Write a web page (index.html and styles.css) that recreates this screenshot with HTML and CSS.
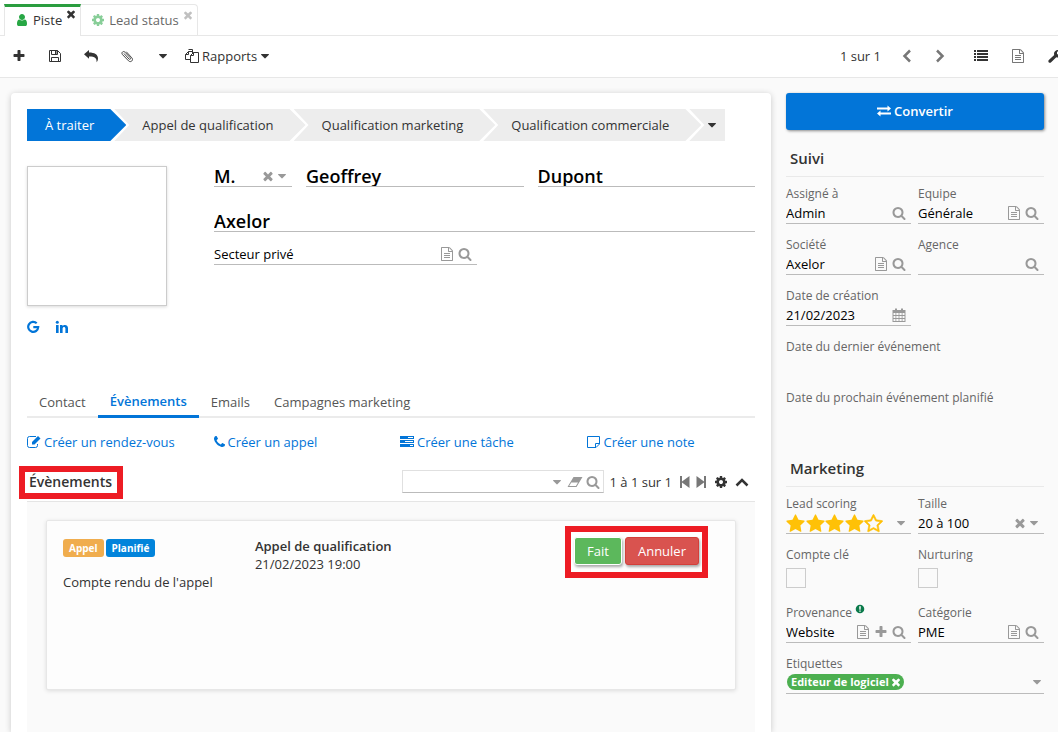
FILE: index.html
```html
<!DOCTYPE html>
<html lang="fr">
<head>
<meta charset="utf-8">
<title>Piste</title>
<link rel="stylesheet" href="styles.css">
</head>
<body>
<svg class="sprite" aria-hidden="true">
  <symbol id="plus" viewBox="0 0 1792 1792"><path d="M1600 736v192q0 40-28 68t-68 28h-416v416q0 40-28 68t-68 28h-192q-40 0-68-28t-28-68v-416h-416q-40 0-68-28t-28-68v-192q0-40 28-68t68-28h416v-416q0-40 28-68t68-28h192q40 0 68 28t28 68v416h416q40 0 68 28t28 68z"/></symbol>
  <symbol id="search" viewBox="0 0 1792 1792"><path d="M1216 832q0-185-131.500-316.500t-316.500-131.500-316.500 131.500-131.500 316.500 131.500 316.500 316.500 131.500 316.500-131.500 131.500-316.500zm512 832q0 52-38 90t-90 38q-54 0-90-38l-343-342q-179 124-399 124-143 0-273.500-55.500t-225-150-150-225-55.500-273.500 55.500-273.500 150-225 225-150 273.500-55.500 273.500 55.500 225 150 150 225 55.500 273.500q0 220-124 399l343 343q37 37 37 90z"/></symbol>
  <symbol id="caret" viewBox="0 0 1792 1792"><path d="M1408 704q0 26-19 45l-448 448q-19 19-45 19t-45-19l-448-448q-19-19-19-45t19-45 45-19h896q26 0 45 19t19 45z"/></symbol>
  <symbol id="close" viewBox="0 0 1792 1792"><path d="M1490 1322q0 40-28 68l-136 136q-28 28-68 28t-68-28l-294-294-294 294q-28 28-68 28t-68-28l-136-136q-28-28-28-68t28-68l294-294-294-294q-28-28-28-68t28-68l136-136q28-28 68-28t68 28l294 294 294-294q28-28 68-28t68 28l136 136q28 28 28 68t-28 68l-294 294 294 294q28 28 28 68z"/></symbol>
  <symbol id="star" viewBox="32 0 1728 1728"><path d="M1728 647q0 22-26 48l-363 354 86 500q1 7 1 20 0 21-10.500 35.500t-30.500 14.500q-19 0-40-12l-449-236-449 236q-22 12-40 12-21 0-31.500-14.500t-10.500-35.500q0-6 2-20l86-500-364-354q-25-27-25-48 0-37 56-46l502-73 225-455q19-41 49-41t49 41l225 455 502 73q56 9 56 46z"/></symbol>
  <symbol id="star-o" viewBox="32 0 1728 1728"><path d="M1201 1004l306-297-422-62-189-382-189 382-422 62 306 297-73 421 378-199 377 199zm527-357q0 22-26 48l-363 354 86 500q1 7 1 20 0 50-41 50-19 0-40-12l-449-236-449 236q-22 12-40 12-21 0-31.500-14.500t-10.500-35.500q0-6 2-20l86-500-364-354q-25-27-25-48 0-37 56-46l502-73 225-455q19-41 49-41t49 41l225 455 502 73q56 9 56 46z" stroke="currentColor" stroke-width="50"/></symbol>
  <symbol id="cog" viewBox="0 0 1792 1792"><path d="M1152 896q0-106-75-181t-181-75-181 75-75 181 75 181 181 75 181-75 75-181zm512-109v222q0 12-8 23t-20 13l-185 28q-19 54-39 91 35 50 107 138 10 12 10 25t-9 23q-27 37-99 108t-94 71q-12 0-26-9l-138-108q-44 23-91 38-16 136-29 186-7 28-36 28h-222q-14 0-24.500-8.500t-11.500-21.500l-28-184q-49-16-90-37l-141 107q-10 9-25 9-14 0-25-11-126-114-165-168-7-10-7-23 0-12 8-23 15-21 51-66.500t54-70.500q-27-50-41-99l-183-27q-13-2-21-12.500t-8-23.500v-222q0-12 8-23t19-13l186-28q14-46 39-92-40-57-107-138-10-12-10-24 0-10 9-23 26-36 98.500-107.500t94.500-71.500q13 0 26 10l138 107q44-23 91-38 16-136 29-186 7-28 36-28h222q14 0 24.500 8.500t11.500 21.500l28 184q49 16 90 37l142-107q9-9 24-9 13 0 25 10 129 119 165 170 7 8 7 22 0 12-8 23-15 21-51 66.500t-54 70.500q26 50 41 98l183 28q13 2 21 12.500t8 23.500z"/></symbol>
  <symbol id="user" viewBox="0 0 1792 1792"><path d="M1536 1399q0 109-62.500 187t-150.500 78h-854q-88 0-150.500-78t-62.500-187q0-85 8.500-160.500t31.500-152 58.500-131 94-89 134.500-34.500q131 128 313 128t313-128q76 0 134.500 34.500t94 89 58.500 131 31.500 152 8.500 160.500zm-256-887q0 159-112.500 271.500t-271.500 112.500-271.500-112.500-112.500-271.500 112.500-271.500 271.500-112.500 271.500 112.500 112.500 271.500z"/></symbol>
  <symbol id="file" viewBox="0 0 1792 1792"><path d="M1596 380q28 28 48 76t20 88v1152q0 40-28 68t-68 28h-1344q-40 0-68-28t-28-68v-1600q0-40 28-68t68-28h896q40 0 88 20t76 48zm-444-244v376h376q-10-29-22-41l-313-313q-12-12-41-22zm384 1528v-1024h-416q-40 0-68-28t-28-68v-416h-768v1536h1280zM512 768h768v128h-768zM512 1024h768v128h-768zM512 1280h768v128h-768z"/></symbol>
  <symbol id="phone" viewBox="192 0 1408 1792"><path d="M1600 1240q0 27-10 70.500t-21 68.500q-21 50-122 106-94 51-186 51-27 0-53-3.500t-57.500-12.500-47-14.500-55.500-20.500-49-18q-98-35-175-83-127-79-264-216t-216-264q-48-77-83-175-3-9-18-49t-20.500-55.500-14.500-47-12.500-57.500-3.500-53q0-92 51-186 56-101 106-122 25-11 68.500-21t70.500-10q14 0 21 3 18 6 53 76 11 19 30 54t35 63.500 31 53.500q3 4 17.500 25t21.500 35.500 7 28.500q0 20-28.500 50t-62 55-62 53-28.500 46q0 9 5 22.500t8.500 20.500 14 24 11.500 19q76 137 174 235t235 174q2 1 19 11.500t24 14 20.500 8.500 22.500 5q18 0 46-28.500t53-62 55-62 50-28.500q14 0 28.500 7t35.500 21.500 25 17.500q25 15 53.500 31t63.500 35 54 30q70 35 76 53 3 7 3 21z"/></symbol>
  <symbol id="save" viewBox="0 0 14 14"><path fill="none" stroke="currentColor" d="M1.500 1.500H9.500L12.500 4.500V12.500H1.500ZM3.500 12.500V8.500H10.500V12.500M3.500 1.500V5.500H9.500V1.500"/><path d="M7 2h1.500v3H7z"/></symbol>
  <symbol id="reply" viewBox="0 0 14 14"><path d="M0 5.200 5 1V3.500C10.500 3.500 14 5.500 14 9.500 14 11 13.300 12.500 12.600 13.300 12.900 9.500 11.300 7.500 5 7.500V9.800Z"/></symbol>
  <symbol id="clip" viewBox="0 0 14 14"><path fill="none" stroke="currentColor" stroke-width=".9" stroke-linecap="round" d="M4.200 4.800 9 10C10 11 11.200 9.800 10.300 8.900L5 3.200C3.300 1.400.8 3.700 2.500 5.600L8.600 11.900C10.800 14 13.900 11 11.800 8.800L6.500 3"/></symbol>
  <symbol id="copy" viewBox="0 0 14 14"><path fill="none" stroke="currentColor" d="M5.500 10.500H.5V5.500L3.500 2.500H7.500V4M3.500 2.500V5.500H.5M5.500 13.500V6.500L8.500 3.500H13.500V13.500ZM8.500 3.500V6.500H5.500M7.500 3V.5H3.500"/></symbol>
  <symbol id="list" viewBox="0 0 14 14"><path d="M0 1h2v2H0zM3 1h11v2H3zM0 4h2v2H0zM3 4h11v2H3zM0 7h2v2H0zM3 7h11v2H3zM0 10h2v2H0zM3 10h11v2H3z"/></symbol>
  <symbol id="wrench" viewBox="0 0 14 14"><path d="M.6 11.300 6.200 6C5.300 3 7.600.5 11.300 1L9 3.100V5.100L11 6 13.500 4.300C13.700 7.500 11 9.200 8.300 8.200L2.900 13.600C1.500 14.300-.3 12.800.6 11.300Z"/></symbol>
  <symbol id="left" viewBox="0 0 14 14"><path fill="none" stroke="currentColor" stroke-width="2.500" d="M10 1.500 4.500 7 10 12.500"/></symbol>
  <symbol id="right" viewBox="0 0 14 14"><path fill="none" stroke="currentColor" stroke-width="2.500" d="M4 1.500 9.500 7 4 12.500"/></symbol>
  <symbol id="up" viewBox="0 0 14 14"><path fill="none" stroke="currentColor" stroke-width="2.500" d="M1.500 10.500 7 5 12.500 10.500"/></symbol>
  <symbol id="exchange" viewBox="0 0 14 14"><path d="M0 3.500H10.500V1.500L14 4.500 10.500 7.500V5.500H0ZM14 8.500H3.500V6.500L0 9.500 3.500 12.500V10.500H14Z"/></symbol>
  <symbol id="google" viewBox="0 0 14 14"><path fill="none" stroke="currentColor" stroke-width="2.200" d="M9.700 3.300A5 5 0 1 0 11.200 7.200H6.300"/></symbol>
  <symbol id="linkedin" viewBox="0 0 14 14"><path d="M1 5h2.600v8H1zM5 5h2.500v1.100C8.600 4.300 13 4.200 13 8v5h-2.600V8.600C10.400 6.300 7.600 6.500 7.600 8.600V13H5z"/><circle cx="2.300" cy="2.300" r="1.500"/></symbol>
  <symbol id="edit" viewBox="0 0 14 14"><path fill="none" stroke="currentColor" d="M9 1.500H2.500Q.5 1.500.5 3.500V10.500Q.5 12.500 2.500 12.500H8.500Q10.500 12.500 10.500 10.500V9"/><path d="M5 7 11 1 13.500 3.500 7.500 9.500H5Z"/></symbol>
  <symbol id="tasks" viewBox="0 0 14 14"><path fill-rule="evenodd" d="M0 1h14v3H0zM8 2v1h5V2zM0 5h14v3H0zM5 6v1h8V6zM0 9h14v3H0zM10 10v1h3v-1z"/></symbol>
  <symbol id="note" viewBox="0 0 14 14"><path fill="none" stroke="currentColor" d="M.5 1.500H12.500V9L9 12.500H.5ZM12.500 8.500H8.500V12.500"/></symbol>
  <symbol id="eraser" viewBox="0 0 16 14"><path fill-rule="evenodd" d="M6.500 2H15.500L9.500 12H.5ZM4.300 7.500 2.200 11H8.900L11 7.500Z"/></symbol>
  <symbol id="first" viewBox="0 0 10 14"><path d="M0 1h2v5.500L9.500 1V13L2 7.500V13H0z"/></symbol>
  <symbol id="last" viewBox="0 0 10 14"><path d="M10 1H8v5.500L.5 1V13L8 7.500V13h2z"/></symbol>
  <symbol id="calendar" viewBox="0 0 14 14"><path fill-rule="evenodd" d="M.5 2H3V.5H5V2H9V.5H11V2H13.500V14H.5ZM1.500 5V7H3.500V5ZM4.300 5V7H6.600V5ZM7.400 5V7H9.700V5ZM10.500 5V7H12.500V5ZM1.500 8V10H3.500V8ZM4.300 8V10H6.600V8ZM7.400 8V10H9.700V8ZM10.500 8V10H12.500V8ZM1.500 11V13H3.500V11ZM4.300 11V13H6.600V11ZM7.400 11V13H9.700V11ZM10.500 11V13H12.500V11Z"/></symbol>
  <symbol id="alert" viewBox="0 0 14 14"><path fill-rule="evenodd" d="M7 1a6 6 0 1 0 0 12A6 6 0 1 0 7 1ZM5.800 3H8.200L7.900 8H6.100ZM6 9H8V11H6Z"/></symbol>
</svg>

<nav class="app-tabs">
  <div class="app-tab active">
    <svg class="icon"><use href="#user"/></svg><a href="#">Piste</a>
    <button class="tab-close" aria-label="Fermer Piste"><svg class="icon small"><use href="#close"/></svg></button>
  </div>
  <div class="app-tab">
    <svg class="icon"><use href="#cog"/></svg><a href="#">Lead status</a>
    <button class="tab-close" aria-label="Fermer Lead status"><svg class="icon small"><use href="#close"/></svg></button>
  </div>
</nav>

<header class="toolbar">
  <div class="tools">
    <button aria-label="Nouveau"><svg class="icon"><use href="#plus"/></svg></button>
    <button aria-label="Enregistrer"><svg class="icon"><use href="#save"/></svg></button>
    <button aria-label="Retour"><svg class="icon"><use href="#reply"/></svg></button>
    <button aria-label="Pièces jointes"><svg class="icon"><use href="#clip"/></svg></button>
    <button aria-label="Plus"><svg class="icon"><use href="#caret"/></svg></button>
  </div>
  <button class="reports"><svg class="icon"><use href="#copy"/></svg><span>Rapports</span><svg class="icon"><use href="#caret"/></svg></button>
  <div class="pager">
    <span>1 sur 1</span>
    <button class="muted" aria-label="Précédent"><svg class="icon"><use href="#left"/></svg></button>
    <button class="muted" aria-label="Suivant"><svg class="icon"><use href="#right"/></svg></button>
  </div>
  <div class="views">
    <button aria-label="Liste"><svg class="icon"><use href="#list"/></svg></button>
    <button class="muted" aria-label="Formulaire"><svg class="icon"><use href="#file"/></svg></button>
    <button aria-label="Outils"><svg class="icon"><use href="#wrench"/></svg></button>
  </div>
</header>

<div class="layout">
  <main class="sheet">
    <div class="steps">
      <button class="step current">À traiter</button>
      <button class="step">Appel de qualification</button>
      <button class="step">Qualification marketing</button>
      <button class="step">Qualification commerciale</button>
      <button class="step more" aria-label="Autres statuts"><svg class="icon"><use href="#caret"/></svg></button>
    </div>

    <section class="identity">
      <div>
        <div class="photo"></div>
        <div class="social">
          <a href="#" aria-label="Google"><svg class="icon"><use href="#google"/></svg></a>
          <a href="#" aria-label="LinkedIn"><svg class="icon"><use href="#linkedin"/></svg></a>
        </div>
      </div>
      <div class="names">
        <div class="name-row">
          <div class="control big tight"><input aria-label="Civilité" value="M."><button aria-label="Effacer"><svg class="icon"><use href="#close"/></svg></button><button aria-label="Choisir"><svg class="icon"><use href="#caret"/></svg></button></div>
          <div class="control big"><input aria-label="Prénom" value="Geoffrey"></div>
          <div class="control big"><input aria-label="Nom" value="Dupont"></div>
        </div>
        <div class="control big"><input aria-label="Entreprise" value="Axelor"></div>
        <div class="control sector"><input aria-label="Secteur" value="Secteur privé"><button aria-label="Ouvrir"><svg class="icon"><use href="#file"/></svg></button><button aria-label="Rechercher"><svg class="icon"><use href="#search"/></svg></button></div>
      </div>
    </section>

    <nav class="form-tabs">
      <a href="#">Contact</a>
      <a href="#" class="active">Évènements</a>
      <a href="#">Emails</a>
      <a href="#">Campagnes marketing</a>
    </nav>

    <div class="actions">
      <a href="#"><svg class="icon"><use href="#edit"/></svg>Créer un rendez-vous</a>
      <a href="#"><svg class="icon phone"><use href="#phone"/></svg>Créer un appel</a>
      <a href="#"><svg class="icon"><use href="#tasks"/></svg>Créer une tâche</a>
      <a href="#"><svg class="icon"><use href="#note"/></svg>Créer une note</a>
    </div>

    <section class="events">
      <div class="events-head">
        <h2 class="marked">Évènements</h2>
        <div class="search-box"><input aria-label="Filtrer"><button aria-label="Filtres"><svg class="icon"><use href="#caret"/></svg></button><button aria-label="Vider"><svg class="icon wide"><use href="#eraser"/></svg></button><button aria-label="Rechercher"><svg class="icon"><use href="#search"/></svg></button></div>
        <span class="count">1 à 1 sur 1</span>
        <div class="page-nav">
          <button aria-label="Première page"><svg class="icon narrow"><use href="#first"/></svg></button>
          <button aria-label="Dernière page"><svg class="icon narrow"><use href="#last"/></svg></button>
        </div>
        <div class="head-tools">
          <button aria-label="Options"><svg class="icon"><use href="#cog"/></svg></button>
          <button aria-label="Réduire"><svg class="icon"><use href="#up"/></svg></button>
        </div>
      </div>
      <div class="events-body">
        <article class="event">
          <div>
            <div class="badges"><span class="badge orange">Appel</span><span class="badge blue">Planifié</span></div>
            <p class="report">Compte rendu de l'appel</p>
          </div>
          <div class="event-info">
            <strong>Appel de qualification</strong>
            <time datetime="2023-02-21T19:00">21/02/2023 19:00</time>
          </div>
          <div class="event-actions marked">
            <button class="btn done">Fait</button>
            <button class="btn cancel">Annuler</button>
          </div>
        </article>
      </div>
    </section>
  </main>

  <aside class="side">
    <button class="convert"><svg class="icon"><use href="#exchange"/></svg>Convertir</button>

    <h2>Suivi</h2>
    <div class="fields">
      <div class="field"><label for="assignee">Assigné à</label><div class="control"><input id="assignee" value="Admin"><button aria-label="Rechercher"><svg class="icon"><use href="#search"/></svg></button></div></div>
      <div class="field"><label for="team">Equipe</label><div class="control"><input id="team" value="Générale"><button aria-label="Ouvrir"><svg class="icon"><use href="#file"/></svg></button><button aria-label="Rechercher"><svg class="icon"><use href="#search"/></svg></button></div></div>
      <div class="field"><label for="company">Société</label><div class="control"><input id="company" value="Axelor"><button aria-label="Ouvrir"><svg class="icon"><use href="#file"/></svg></button><button aria-label="Rechercher"><svg class="icon"><use href="#search"/></svg></button></div></div>
      <div class="field"><label for="agency">Agence</label><div class="control"><input id="agency"><button aria-label="Rechercher"><svg class="icon"><use href="#search"/></svg></button></div></div>
      <div class="field"><label for="created">Date de création</label><div class="control"><input id="created" value="21/02/2023"><button aria-label="Calendrier"><svg class="icon"><use href="#calendar"/></svg></button></div></div>
      <div class="field full"><label for="last-event">Date du dernier événement</label><div class="control plain"><input id="last-event" readonly></div></div>
      <div class="field full"><label for="next-event">Date du prochain événement planifié</label><div class="control plain"><input id="next-event" readonly></div></div>
    </div>

    <h2>Marketing</h2>
    <div class="fields">
      <div class="field"><span class="label" id="scoring">Lead scoring</span><div class="control tight"><div class="stars" role="img" aria-labelledby="scoring"><svg><use href="#star"/></svg><svg><use href="#star"/></svg><svg><use href="#star"/></svg><svg><use href="#star"/></svg><svg><use href="#star-o"/></svg></div><button aria-label="Choisir"><svg class="icon"><use href="#caret"/></svg></button></div></div>
      <div class="field"><label for="size">Taille</label><div class="control tight"><input id="size" value="20 à 100"><button aria-label="Effacer"><svg class="icon"><use href="#close"/></svg></button><button aria-label="Choisir"><svg class="icon"><use href="#caret"/></svg></button></div></div>
      <div class="field"><label for="key">Compte clé</label><input type="checkbox" id="key"></div>
      <div class="field"><label for="nurturing">Nurturing</label><input type="checkbox" id="nurturing"></div>
      <div class="field"><label for="source">Provenance <svg class="icon alert"><use href="#alert"/></svg></label><div class="control"><input id="source" value="Website"><button aria-label="Ouvrir"><svg class="icon"><use href="#file"/></svg></button><button aria-label="Ajouter"><svg class="icon"><use href="#plus"/></svg></button><button aria-label="Rechercher"><svg class="icon"><use href="#search"/></svg></button></div></div>
      <div class="field"><label for="category">Catégorie</label><div class="control"><input id="category" value="PME"><button aria-label="Ouvrir"><svg class="icon"><use href="#file"/></svg></button><button aria-label="Rechercher"><svg class="icon"><use href="#search"/></svg></button></div></div>
      <div class="field full"><label for="tags">Etiquettes</label><div class="control tags"><span class="tag">Editeur de logiciel<button aria-label="Retirer"><svg class="icon small"><use href="#close"/></svg></button></span><input id="tags"><button aria-label="Choisir"><svg class="icon"><use href="#caret"/></svg></button></div></div>
    </div>
  </aside>
</div>
</body>
</html>
```
FILE: styles.css
```css
* { box-sizing: border-box; }

html, body { height: 100%; }

body {
  margin: 0;
  display: flex;
  flex-direction: column;
  overflow: hidden;
  background: #fafafa;
  color: #333;
  font: 13px/20px "Open Sans", "Noto Sans", sans-serif;
}

h2, p { margin: 0; }

a { color: #0275d8; text-decoration: none; }

button, input {
  margin: 0;
  padding: 0;
  border: 0;
  background: none;
  color: inherit;
  font: inherit;
}

button { display: inline-flex; align-items: center; justify-content: center; }

.sprite { display: none; }

.icon { flex: none; display: block; width: 14px; height: 14px; fill: currentColor; }
.icon.small { width: 12px; height: 12px; }
.icon.wide { width: 16px; }
.icon.narrow { width: 10px; }
.icon.phone { width: 11px; }

/* Application tabs */
.app-tabs {
  flex: none;
  display: flex;
  height: 36px;
  padding: 4px 4px 0;
  background: #fff;
  border-bottom: 1px solid #e7e7e7;
}

.app-tab {
  display: flex;
  align-items: center;
  gap: 4px;
  height: 31px;
  padding: 0 3px 0 10px;
  border: 1px solid #e7e7e7;
  border-left: 0;
  border-bottom: 0;
  border-radius: 0 4px 0 0;
  color: #28a745;
}

.app-tab a { color: #333; }
.app-tab:not(.active) > .icon { opacity: .55; }
.app-tab:not(.active) a { opacity: .75; }
.app-tab:not(.active) .tab-close { opacity: .3; }

.app-tab.active {
  height: 32px;
  padding: 0 3px 3px 10px;
  border-left: 1px solid #e7e7e7;
  border-top: 3px solid #2a9d3f;
  border-radius: 0;
  background: #fff;
}

.tab-close { align-self: flex-start; margin-left: -1px; padding-top: 4px; color: #333; }
.active .tab-close { padding-top: 1px; }

/* Toolbar */
.toolbar {
  flex: none;
  display: flex;
  align-items: center;
  height: 42px;
  padding: 0 0 2px 12px;
  overflow: hidden;
  background: #fff;
  border-bottom: 1px solid #e7e7e7;
}

.tools { display: flex; gap: 22px; }
.reports { margin-left: 15px; gap: 3px; }
.reports .icon:last-child { margin-left: -2px; }
.pager { display: flex; align-items: center; gap: 19px; margin-left: auto; }
.views { display: flex; gap: 23px; margin: 0 -4px 0 27px; }
.muted { color: #777; }

/* Page */
.layout {
  flex: 1;
  display: flex;
  gap: 15px;
  min-height: 0;
  padding: 15px 14px 0 11px;
}

.sheet {
  flex: 1;
  display: flex;
  flex-direction: column;
  min-width: 0;
  padding: 16px 16px 0;
  border-radius: 4px 4px 0 0;
  background: #fff;
  box-shadow: 0 1px 6px rgba(0, 0, 0, .2);
}

/* Status steps */
.steps { display: flex; height: 32px; }

.step {
  height: 32px;
  margin-left: -12px;
  padding: 0 32px 0 28px;
  background: #ededed;
  white-space: nowrap;
  clip-path: polygon(0 0, calc(100% - 16px) 0, 100% 50%, calc(100% - 16px) 100%, 0 100%, 15px 50%);
}

.step.current {
  margin-left: 0;
  padding-left: 18px;
  background: #0275d8;
  color: #fff;
  clip-path: polygon(0 0, calc(100% - 16px) 0, 100% 50%, calc(100% - 16px) 100%, 0 100%);
}

.step.more {
  padding: 0 6px 0 16px;
  clip-path: polygon(0 0, 100% 0, 100% 100%, 0 100%, 15px 50%);
}

/* Identity */
.identity {
  display: grid;
  grid-template-columns: 169px 1fr;
  gap: 18px;
  height: 221px;
  margin-top: 25px;
}

.photo {
  width: 140px;
  height: 140px;
  border: 1px solid #ccc;
  box-shadow: 0 1px 3px rgba(0, 0, 0, .15);
}

.social { display: flex; gap: 14px; margin-top: 14px; }

.names { display: flex; flex-direction: column; gap: 12px; }
.name-row { display: grid; grid-template-columns: 78px 1fr 1fr; gap: 14px; margin-bottom: 12px; }

.control {
  display: flex;
  align-items: center;
  gap: 4px;
  height: 21px;
  padding-right: 5px;
  border-bottom: 1px solid #bbb;
  color: #999;
}

.control input { flex: 1; min-width: 0; width: 0; height: 20px; color: #000; outline: 0; }
.control.tight { gap: 0; padding-right: 3px; }
.control.plain { border-color: transparent; }
.control.big { font-size: 18px; font-weight: 600; }
.sector { width: 263px; }

/* Form tabs */
.form-tabs { display: flex; height: 31px; border-bottom: 2px solid #ebebeb; }
.form-tabs a { height: 31px; padding: 5px 12px 0; color: #555; }
.form-tabs .active { padding-top: 4px; border-bottom: 3px solid #0275d8; color: #0275d8; font-weight: 600; }

.actions { display: grid; grid-template-columns: repeat(4, 1fr); gap: 18px; padding: 14px 0 10px; }
.actions a { display: flex; align-items: center; gap: 3px; white-space: nowrap; }

/* Events */
.events { flex: 1; display: flex; flex-direction: column; }

.events-head {
  display: flex;
  align-items: center;
  height: 40px;
  padding: 0 6px 0 2px;
  border-bottom: 1px solid #e5e5e5;
}

.events-head h2 { margin: 2px auto 0 -4px; padding: 0 5px 1px 4px; font-size: 14px; font-weight: 600; line-height: 20px; }

.marked { outline: 6px solid #ed1c24; background: #fff; }

.search-box {
  display: flex;
  align-items: center;
  gap: 3px;
  width: 202px;
  height: 23px;
  padding-right: 3px;
  border: 1px solid #e0e0e0;
  border-bottom-color: #bbb;
  color: #999;
}

.search-box input { flex: 1; min-width: 0; outline: 0; }
.count { margin-left: 5px; }
.page-nav { display: flex; gap: 6px; margin-left: 8px; color: #777; }
.head-tools { display: flex; gap: 7px; margin-left: 8px; }

.events-body { flex: 1; padding: 18px 19px; background: #fafafa; }

.event {
  display: grid;
  grid-template-columns: 7fr 12fr auto;
  gap: 18px;
  align-items: start;
  height: 170px;
  padding: 11px 33px 16px 16px;
  border: 1px solid #e7e7e7;
  border-radius: 2px;
  background: #fdfdfd;
  box-shadow: 0 1px 4px rgba(0, 0, 0, .12);
}

.badges { display: flex; gap: 2px; padding-top: 7px; }
.badge { padding: 0 6px; border-radius: 3px; color: #fff; font-size: 10px; font-weight: 700; line-height: 18px; }
.orange { background: #f0ad4e; }
.blue { background: #0284db; }
.report { margin-top: 15px; white-space: nowrap; }

.event-info { display: flex; flex-direction: column; padding-top: 5px; line-height: 18px; white-space: nowrap; }
.event-info strong { font-weight: 600; }

.event-actions { display: flex; gap: 3px; height: 40px; padding: 5px 3px 7px; }

.btn {
  height: 28px;
  padding: 0 12px;
  border: 1px solid #fff;
  border-radius: 3px;
  color: #fff;
  box-shadow: 1px 2px 3px rgba(0, 0, 0, .35);
}

.done { background: #5cb85c; }
.cancel { background: #d9534f; border-color: #d43f3a; }

/* Side panel */
.side { flex: none; width: 258px; }

.convert {
  width: 100%;
  height: 37px;
  padding-bottom: 2px;
  gap: 3px;
  border-radius: 3px;
  background: #0275d8;
  color: #fff;
  font-weight: 600;
  box-shadow: 1px 1px 3px rgba(0, 0, 0, .45);
}

.side h2 {
  height: 47px;
  margin-bottom: 6px;
  padding: 18px 4px 0;
  border-bottom: 1px solid #e9e9e9;
  font-size: 15px;
  font-weight: 600;
}

.fields { display: grid; grid-template-columns: 125px 1fr; gap: 10px 7px; padding-bottom: 12px; }
.full { grid-column: 1 / -1; }
.field { min-width: 0; }
.field > label, .field > .label { display: flex; gap: 3px; height: 20px; color: #666; font-size: 12px; line-height: 22px; }
.alert { width: 10px; height: 10px; margin-top: 2px; color: #0b7a4b; }

.stars { display: flex; justify-content: space-between; width: 97px; margin-right: auto; color: #ffc107; }
.stars svg { width: 19px; height: 19px; fill: currentColor; }

.field input[type="checkbox"] {
  appearance: none;
  display: block;
  width: 20px;
  height: 20px;
  margin: 4px 0;
  border: 1px solid #ccc;
}

.control.tags { padding-right: 0; padding-bottom: 3px; }

.tag {
  display: flex;
  align-items: center;
  height: 16px;
  margin-left: 1px;
  padding: 0 2px 0 4px;
  border-radius: 8px;
  background: #4caf50;
  color: #fff;
  font-size: 11px;
  font-weight: 700;
}

.tag button { margin-left: 1px; }
```
